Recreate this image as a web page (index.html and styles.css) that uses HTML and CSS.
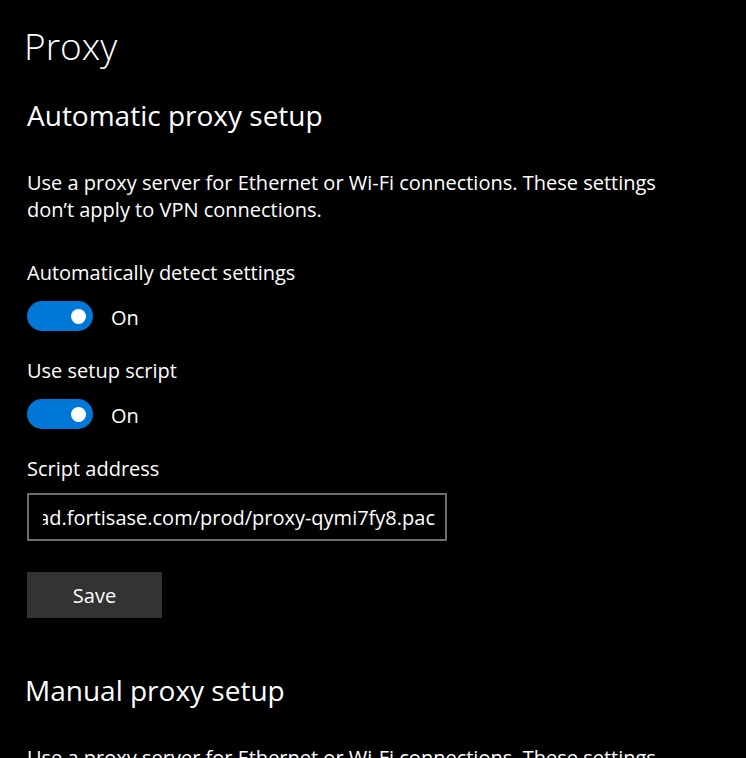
FILE: index.html
```html
<!DOCTYPE html>
<html>
<head>
<meta charset="utf-8">
<link rel="stylesheet" href="styles.css">
</head>
<body>
<main class="page">
  <h1 class="title">Proxy</h1>
  <section class="section">
    <h2 class="subtitle">Automatic proxy setup</h2>
    <p class="desc">Use a proxy server for Ethernet or Wi-Fi connections. These settings don’t apply to VPN connections.</p>
    <div class="setting">
      <div class="label">Automatically detect settings</div>
      <div class="toggle-row">
        <span class="toggle"><span class="knob"></span></span>
        <span class="state">On</span>
      </div>
    </div>
    <div class="setting">
      <div class="label">Use setup script</div>
      <div class="toggle-row">
        <span class="toggle"><span class="knob"></span></span>
        <span class="state">On</span>
      </div>
    </div>
    <div class="setting">
      <div class="label">Script address</div>
      <div class="input"><div class="viewport"><span class="input-text">https://download.fortisase.com/prod/proxy-qymi7fy8.pac</span></div></div>
    </div>
    <button class="btn">Save</button>
  </section>
  <section class="section manual">
    <h2 class="subtitle">Manual proxy setup</h2>
    <p class="desc">Use a proxy server for Ethernet or Wi-Fi connections. These settings don’t apply to VPN connections.</p>
  </section>
</main>
</body>
</html>
```
FILE: styles.css
```css
html, body {
  margin: 0;
  padding: 0;
  background: #000;
  color: #fff;
  font-family: "Open Sans", "Noto Sans", sans-serif;
  overflow: hidden;
  height: 758px;
}
.page {
  padding: 21px 0 0 27px;
}
.title {
  margin: 0 0 0 -3px;
  font-weight: 300;
  font-size: 37px;
  line-height: 50px;
}
.section {
  display: flex;
  flex-direction: column;
  align-items: flex-start;
}
.subtitle {
  margin: 25px 0 0 0;
  font-weight: 400;
  font-size: 28px;
  line-height: 38px;
}
.manual .subtitle {
  margin-top: 53px;
  margin-left: -2px;
}
.desc {
  margin: 35px 0 0 0;
  font-size: 20px;
  line-height: 27px;
  max-width: 660px;
}
.setting {
  margin-top: 36px;
  display: flex;
  flex-direction: column;
  align-items: flex-start;
}
.setting + .setting {
  margin-top: 26px;
}
.label {
  font-size: 20px;
  line-height: 27px;
}
.toggle-row {
  margin-top: 15px;
  display: flex;
  align-items: center;
  gap: 18px;
  height: 30px;
}
.toggle {
  width: 66px;
  height: 30px;
  border-radius: 15px;
  background: #0078d7;
  display: flex;
  align-items: center;
  justify-content: flex-end;
  padding: 0 7px;
  box-sizing: border-box;
}
.knob {
  width: 15px;
  height: 15px;
  border-radius: 50%;
  background: #fff;
}
.state {
  font-size: 20px;
  line-height: 27px;
  padding-top: 2px;
}
.input {
  margin-top: 11px;
  width: 420px;
  height: 48px;
  border: 2px solid #6e6e6e;
  box-sizing: border-box;
  padding: 0 10px 0 14px;
  display: flex;
  align-items: center;
}
.viewport {
  flex: 1;
  overflow: hidden;
  display: flex;
  justify-content: flex-end;
  white-space: nowrap;
  font-size: 20px;
  line-height: 27px;
}
.input-text {
  flex: none;
}
.btn {
  margin-top: 31px;
  width: 135px;
  height: 46px;
  border: 0;
  background: #333;
  color: #fff;
  font-family: inherit;
  font-size: 20px;
  padding: 0;
}
```
